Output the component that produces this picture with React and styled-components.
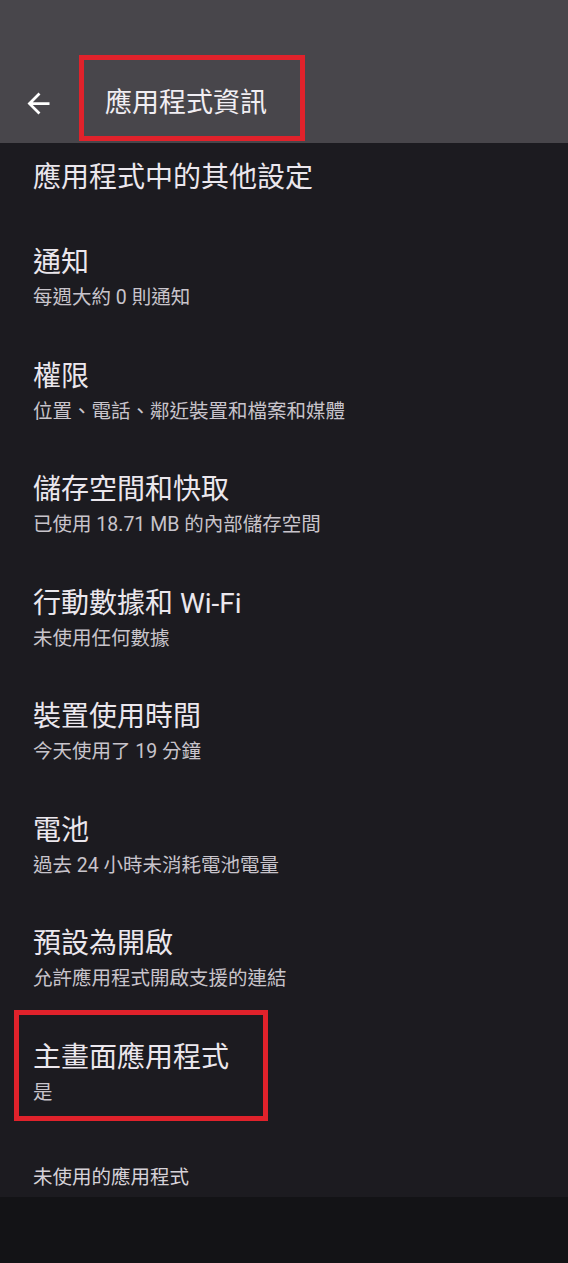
import styled, { createGlobalStyle } from "styled-components";

const GlobalStyle = createGlobalStyle`
  html, body {
    margin: 0;
    padding: 0;
    background: #131316;
  }
  body {
    font-family: "Roboto", "Noto Sans CJK TC", sans-serif;
  }
`;

const items = [
  { title: "通知", sub: "每週大約 0 則通知" },
  { title: "權限", sub: "位置、電話、鄰近裝置和檔案和媒體" },
  { title: "儲存空間和快取", sub: "已使用 18.71 MB 的內部儲存空間" },
  { title: "行動數據和 Wi-Fi", sub: "未使用任何數據" },
  { title: "裝置使用時間", sub: "今天使用了 19 分鐘" },
  { title: "電池", sub: "過去 24 小時未消耗電池電量" },
  { title: "預設為開啟", sub: "允許應用程式開啟支援的連結" },
  { title: "主畫面應用程式", sub: "是", highlight: true },
];

const Screen = styled.div`
  width: 568px;
  height: 1263px;
  display: flex;
  flex-direction: column;
  background: #131316;
  overflow: hidden;
`;

const Header = styled.header`
  height: 143px;
  box-sizing: border-box;
  background: #48464b;
  display: flex;
  align-items: flex-start;
  padding: 55px 0 0 22px;
`;

const BackButton = styled.div`
  width: 33px;
  height: 33px;
  margin-top: 32px;
  color: #ffffff;
  svg {
    display: block;
  }
`;

const TitleBox = styled.div`
  margin-left: 24px;
  width: 226px;
  height: 86px;
  box-sizing: border-box;
  border: 5px solid #e0222b;
  padding: 25px 0 0 21px;
  font-size: 27px;
  line-height: 36px;
  color: #f1eef3;
  white-space: nowrap;
`;

const List = styled.main`
  background: #1c1b20;
  display: flex;
  flex-direction: column;
`;

const SectionTitle = styled.div`
  padding: 15px 33px 23px;
  font-size: 28px;
  line-height: 40px;
  color: #ebe7ed;
`;

const Row = styled.div`
  position: relative;
  padding: 22px 33px 21.5px;
  display: flex;
  flex-direction: column;

  ${(p) =>
    p.$highlight &&
    `
    &::after {
      content: "";
      position: absolute;
      top: -5.5px;
      left: 14px;
      width: 254px;
      height: 111px;
      box-sizing: border-box;
      border: 5px solid #e0222b;
    }
  `}
`;

const RowTitle = styled.div`
  font-size: 28px;
  line-height: 40px;
  color: #ebe7ed;
`;

const RowSub = styled.div`
  font-size: 19.5px;
  line-height: 30px;
  color: #c8c4cb;
`;

const Footer = styled.div`
  padding: 34px 33px 4px;
  font-size: 19.5px;
  line-height: 30px;
  color: #d6d2d8;
`;

const Bottom = styled.div`
  flex: 1;
  background: #131316;
`;

const ArrowBack = () => (
  <svg width="33" height="33" viewBox="0 0 24 24" fill="currentColor">
    <path d="M20 11H7.83l5.59-5.59L12 4l-8 8 8 8 1.41-1.41L7.83 13H20v-2z" />
  </svg>
);

export default function App() {
  return (
    <>
      <GlobalStyle />
      <Screen>
        <Header>
          <BackButton>
            <ArrowBack />
          </BackButton>
          <TitleBox>應用程式資訊</TitleBox>
        </Header>
        <List>
          <SectionTitle>應用程式中的其他設定</SectionTitle>
          {items.map((item) => (
            <Row key={item.title} $highlight={item.highlight}>
              <RowTitle>{item.title}</RowTitle>
              <RowSub>{item.sub}</RowSub>
            </Row>
          ))}
          <Footer>未使用的應用程式</Footer>
        </List>
        <Bottom />
      </Screen>
    </>
  );
}
